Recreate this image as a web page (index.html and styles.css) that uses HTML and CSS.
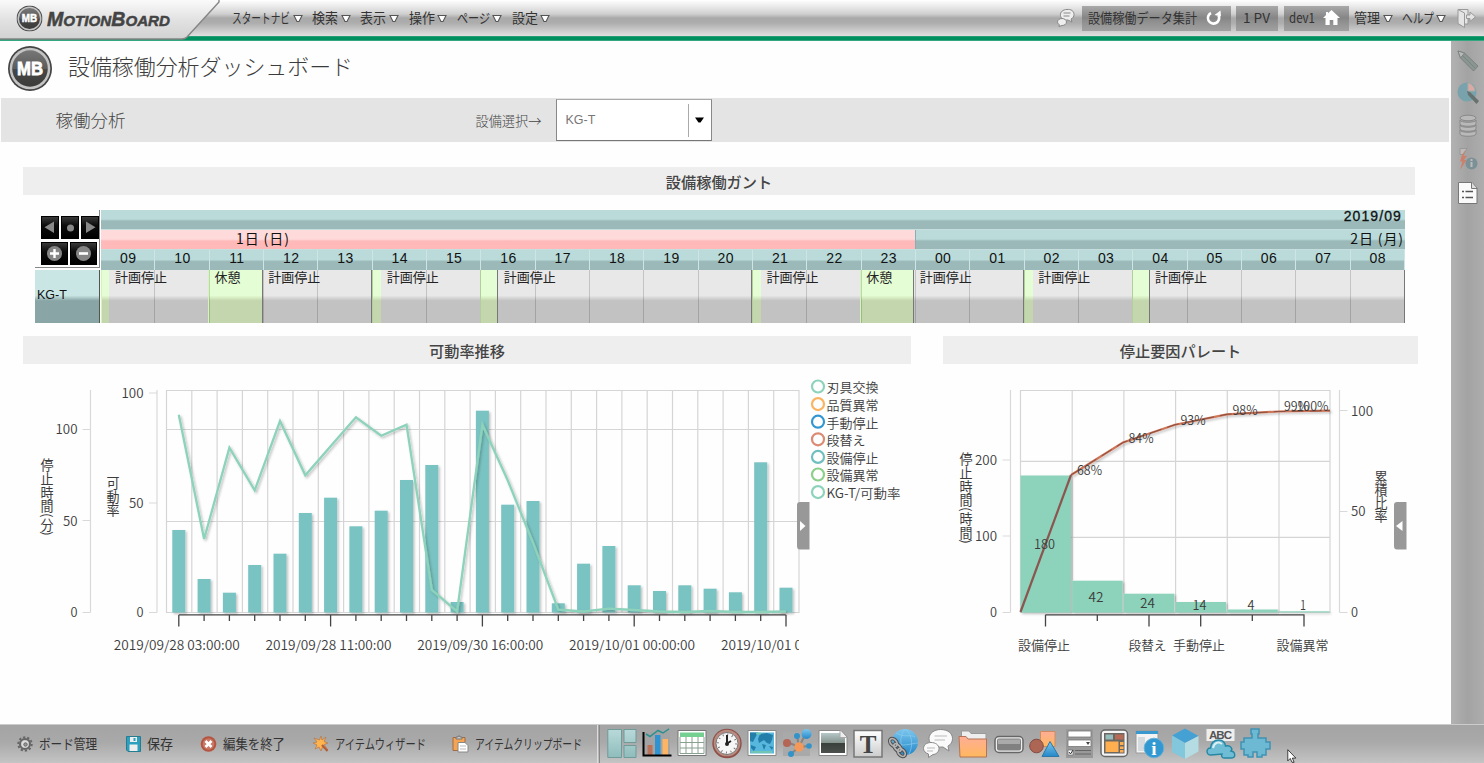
FILE: index.html
```html
<!DOCTYPE html>
<html lang="ja">
<head>
<meta charset="utf-8">
<title>MotionBoard</title>
<link rel="stylesheet" href="styles.css">
</head>
<body>
<svg class="defs" width="0" height="0">
  <defs>
    <linearGradient id="badge" x1="0" y1="0" x2="0" y2="1"><stop offset="0" stop-color="#777"/><stop offset=".5" stop-color="#5c5c5c"/><stop offset=".52" stop-color="#474747"/><stop offset="1" stop-color="#3c3c3a"/></linearGradient>
    <linearGradient id="panel" x1="0" y1="0" x2="0" y2="1"><stop offset="0" stop-color="#fff"/><stop offset="1" stop-color="#ccc"/></linearGradient>
    <linearGradient id="blue" x1="0" y1="0" x2="0" y2="1"><stop offset="0" stop-color="#7cc6ee"/><stop offset="1" stop-color="#2488c8"/></linearGradient>
    <linearGradient id="teal" x1="0" y1="0" x2="0" y2="1"><stop offset="0" stop-color="#b9d9d9"/><stop offset="1" stop-color="#8fbcbc"/></linearGradient>
    <linearGradient id="orange" x1="0" y1="0" x2="0" y2="1"><stop offset="0" stop-color="#ffae96"/><stop offset="1" stop-color="#ffb85e"/></linearGradient>
    <linearGradient id="photo" x1="0" y1="0" x2="0" y2="1"><stop offset="0" stop-color="#b5c7c7"/><stop offset=".48" stop-color="#87958f"/><stop offset=".52" stop-color="#3a403c"/><stop offset="1" stop-color="#4b504c"/></linearGradient>
    <symbol id="mb" viewBox="0 0 44 44">
      <circle cx="22" cy="22" r="22" fill="#444"/><circle cx="22" cy="22" r="20.3" fill="#c4c4c4"/><circle cx="22" cy="22" r="17.8" fill="url(#badge)"/>
      <text x="22" y="28.5" text-anchor="middle" class="mb-letters" textLength="26" lengthAdjust="spacingAndGlyphs">MB</text>
    </symbol>
  </defs>
</svg>

<header class="topbar">
  <div class="brand">
    <svg class="brand-tab" width="222" height="41" viewBox="0 0 222 41">
      <defs><linearGradient id="tab" x1="0" y1="0" x2="0" y2="1"><stop offset="0" stop-color="#fafafa"/><stop offset=".5" stop-color="#e2e2e2"/><stop offset="1" stop-color="#d2d2d2"/></linearGradient></defs>
      <path d="M0 0H219V2L187 37Q185 39 182 39H0Z" fill="url(#tab)"/>
      <path d="M0 39H182Q185 39 187 37L219 2V0" fill="none" stroke="#858585" stroke-width="1.4"/>
      <use href="#mb" x="16.5" y="5.5" width="26" height="26"/>
      <text x="47" y="26" class="wordmark" textLength="123" lengthAdjust="spacingAndGlyphs"><tspan font-size="20">M</tspan>OTION<tspan font-size="20">B</tspan>OARD</text>
    </svg>
  </div>
  <nav class="menu">
    <div class="menu-item"><svg class="label" width="58" height="20"><text y="15" textLength="58" lengthAdjust="spacingAndGlyphs">スタートナビ</text></svg><svg class="caret" width="10" height="9"><path d="M1 1.500H9L6 7.500H4Z"/></svg></div>
    <div class="menu-item"><svg class="label" width="26" height="20"><text y="15" textLength="26" lengthAdjust="spacingAndGlyphs">検索</text></svg><svg class="caret" width="10" height="9"><path d="M1 1.500H9L6 7.500H4Z"/></svg></div>
    <div class="menu-item"><svg class="label" width="26" height="20"><text y="15" textLength="26" lengthAdjust="spacingAndGlyphs">表示</text></svg><svg class="caret" width="10" height="9"><path d="M1 1.500H9L6 7.500H4Z"/></svg></div>
    <div class="menu-item"><svg class="label" width="26" height="20"><text y="15" textLength="26" lengthAdjust="spacingAndGlyphs">操作</text></svg><svg class="caret" width="10" height="9"><path d="M1 1.500H9L6 7.500H4Z"/></svg></div>
    <div class="menu-item"><svg class="label" width="33" height="20"><text y="15" textLength="33" lengthAdjust="spacingAndGlyphs">ページ</text></svg><svg class="caret" width="10" height="9"><path d="M1 1.500H9L6 7.500H4Z"/></svg></div>
    <div class="menu-item"><svg class="label" width="26" height="20"><text y="15" textLength="26" lengthAdjust="spacingAndGlyphs">設定</text></svg><svg class="caret" width="10" height="9"><path d="M1 1.500H9L6 7.500H4Z"/></svg></div>
  </nav>
  <div class="tools">
    <svg class="tool-chat" width="20" height="20" viewBox="0 0 20 20"><g fill="#eee" stroke="#888"><path d="M11 1.500C15 1 18 3 18 6.500C18 8.500 17 10 15 11L16 14L12 12C8 12.300 5 10.500 4.500 7.500C4 4 7 1.500 11 1.500Z"/><path d="M6 10.500C8.500 10.500 10.500 12 10.500 14C10.500 16 8.500 17.500 6 17.500L3 18.500L3.300 16.500C2 15.800 1.500 15 1.500 14C1.500 12 3.500 10.500 6 10.500Z"/><path d="M7.500 5h7M7.500 8h6" fill="none"/></g></svg>
    <div class="chip chip-data"><svg class="label" width="110" height="20"><text y="15" textLength="109" lengthAdjust="spacingAndGlyphs">設備稼働データ集計</text></svg>
      <svg width="16" height="16" viewBox="0 0 16 16"><path d="M5 3A5.600 5.600 0 1 0 12.500 5.500" fill="none" stroke="#fff" stroke-width="2.600"/><path d="M8.500 5L15 6.500L14.500 .5Z" fill="#fff"/></svg></div>
    <div class="chip chip-pv"><svg class="label" width="28" height="20"><text y="15" textLength="27" lengthAdjust="spacingAndGlyphs">1 PV</text></svg></div>
    <div class="chip chip-user"><svg class="label" width="27" height="20"><text y="15" textLength="26" lengthAdjust="spacingAndGlyphs">dev1</text></svg>
      <svg width="17" height="16" viewBox="0 0 17 16"><path d="M8.500 0L17 8H14.500V15H10.300V10H6.700V15H2.500V8H0L3 5V2H5V3.300Z" fill="#fff"/></svg></div>
    <div class="menu-item"><svg class="label" width="26" height="20"><text y="15" textLength="26" lengthAdjust="spacingAndGlyphs">管理</text></svg><svg class="caret" width="10" height="9"><path d="M1 1.500H9L6 7.500H4Z"/></svg></div>
    <div class="menu-item help"><svg class="label" width="32" height="20"><text y="15" textLength="32" lengthAdjust="spacingAndGlyphs">ヘルプ</text></svg><svg class="caret" width="10" height="9"><path d="M1 1.500H9L6 7.500H4Z"/></svg></div>
    <svg class="tool-exit" width="20" height="21" viewBox="0 0 20 21"><g fill="#e4e4e4" stroke="#999"><path d="M1 1.500H11V16H7.500M1 1.500L7.500 5V19.500L1 15.500Z"/><path d="M9.500 7H13V4L18.500 8.800L13 13.500V10.500H9.500Z"/></g></svg>
  </div>
</header>

<main class="workspace">
  <section class="board">
    <div class="board-title">
      <svg width="44" height="45" viewBox="0 0 44 44" preserveAspectRatio="none"><use href="#mb"/></svg>
      <svg class="title-text" width="300" height="34"><text y="25" textLength="285" lengthAdjust="spacingAndGlyphs">設備稼働分析ダッシュボード</text></svg>
    </div>
    <div class="filterbar">
      <h2 class="filter-name">稼働分析</h2>
      <span class="filter-label">設備選択→</span>
      <div class="select"><span class="select-value">KG-T</span><span class="select-arrow"><svg width="9" height="6"><path d="M0 .5H9L5.500 5.500H3.500Z" fill="#000"/></svg></span></div>
    </div>
    <h3 class="heading heading-gantt">設備稼働ガント</h3>
    <div class="gantt">
      <div class="gantt-side">
        <div class="gantt-corner">
          <div class="pad">
            <i><svg width="16" height="21"><path d="M12 4.500V16L2.500 10.300Z" fill="#888"/></svg></i>
            <i><svg width="16" height="21"><circle cx="8.500" cy="11" r="3.500" fill="#888"/></svg></i>
            <i><svg width="16" height="21"><path d="M4 4.500V16L13.500 10.300Z" fill="#888"/></svg></i>
          </div>
          <div class="pad pad-zoom">
            <i><svg width="25" height="22"><circle cx="12.500" cy="10.500" r="7.500" fill="#858585"/><path d="M8 10.500H17M12.500 6V15" stroke="#fff" stroke-width="2.400"/></svg></i>
            <i><svg width="25" height="22"><circle cx="12.500" cy="10.500" r="7.500" fill="#858585"/><path d="M8 10.500H17" stroke="#fff" stroke-width="2.600"/></svg></i>
          </div>
        </div>
        <div class="gantt-name">KG-T</div>
      </div>
      <div class="gantt-main">
        <div class="gantt-row month">2019/09</div>
        <div class="gantt-row days"><div class="day sunday">1日 (日)</div><div class="day monday">2日 (月)</div></div>
        <div class="gantt-row hours" id="hours"></div>
        <div class="gantt-body" id="segments"></div>
      </div>
    </div>
    <div class="charts">
      <div class="panel panel-trend">
        <h3 class="heading">可動率推移</h3>
        <svg id="trend" class="chart" width="888" height="296" viewBox="23 370 888 296"></svg>
      </div>
      <div class="panel panel-pareto">
        <h3 class="heading">停止要因パレート</h3>
        <svg id="pareto" class="chart" width="475" height="296" viewBox="943 370 475 296"></svg>
      </div>
    </div>
  </section>
  <aside class="sidebar">
    <svg width="22" height="22" viewBox="0 0 22 22"><g stroke="#7d8380"><path d="M1 1L7.500 3L21 16L16.500 21L3.500 8Z" fill="#899692"/><path d="M1 1L7.500 3L3.500 8Z" fill="#bbb"/><path d="M5.500 5.500L18.500 18.500" fill="none"/></g></svg>
    <svg width="22" height="22" viewBox="0 0 22 22"><circle cx="10" cy="10" r="9.500" fill="#78a2ac"/><path d="M11 9V1A9 9 0 0 1 18 9Z" fill="#d9a9a2" stroke="#aaa"/><path d="M10 9L13 10L22 19L19.500 22L11 13Z" fill="#66726f"/></svg>
    <svg width="22" height="23" viewBox="0 0 22 23"><g fill="#b9b9b9" stroke="#898989"><path d="M3 16v4c0 3 16 3 16 0v-4c0 3-16 3-16 0"/><path d="M3 11v4c0 3 16 3 16 0v-4c0 3-16 3-16 0"/><path d="M3 6v4c0 3 16 3 16 0V6c0 3-16 3-16 0"/><ellipse cx="11" cy="4" rx="8" ry="2.800"/></g></svg>
    <svg width="22" height="24" viewBox="0 0 22 24"><path d="M3 1.500H10L7 7.500H3Z" fill="#bbb" stroke="#999"/><path d="M9 2L6.500 9L10 8.500L7 13H9.500L3 23L5.500 14.500H3L5 8Z" fill="#cc7f6a"/><circle cx="14.500" cy="16.500" r="6" fill="#7c9195"/><path d="M14.500 15v5M14.500 12v2" stroke="#bbb" stroke-width="2"/></svg>
    <svg width="22" height="24" viewBox="0 0 22 24"><path d="M1.500 1.500H15L20 7V22.500H1.500Z" fill="#fafafa" stroke="#777"/><path d="M14.500 1.500V7.500H20" fill="#ddd" stroke="#777"/><path d="M8.500 10.500H16M8.500 16.500H16M5 10.500H7M5 16.500H7" stroke="#555" stroke-width="1.300"/></svg>
  </aside>
</main>

<footer class="dock">
  <div class="commands">
    <div class="command c1"><svg width="16" height="16" viewBox="0 0 16 16"><circle cx="8" cy="8" r="5" fill="#bbb" stroke="#666" stroke-width="2"/><circle cx="8" cy="8" r="6.700" fill="none" stroke="#666" stroke-width="2" stroke-dasharray="2.200 2"/><circle cx="8" cy="8" r="3.500" fill="#ddd"/><circle cx="8.500" cy="8.500" r="1.700" fill="#999" stroke="#666"/></svg><svg class="label" width="59" height="20"><text y="15" textLength="58" lengthAdjust="spacingAndGlyphs">ボード管理</text></svg></div>
    <div class="command c2"><svg width="15" height="16" viewBox="0 0 15 16"><path d="M.5.5H14.500V15.500H2L.5 14Z" fill="#2da0bd" stroke="#267c90"/><path d="M4 1H11V6H4ZM3.500 8.500H11.500V15H3.500Z" fill="#eee"/><path d="M7.500 2H9.500V5H7.500Z" fill="#2da0bd"/></svg><svg class="label" width="27" height="20"><text y="15" textLength="26" lengthAdjust="spacingAndGlyphs">保存</text></svg></div>
    <div class="command c3"><svg width="17" height="16" viewBox="0 0 17 16"><circle cx="8.500" cy="8" r="7.800" fill="#b4553f"/><circle cx="8.500" cy="8" r="5.800" fill="#c87866"/><path d="M5.500 5L11.500 11M11.500 5L5.500 11" stroke="#fff" stroke-width="2.600"/></svg><svg class="label" width="63" height="20"><text y="15" textLength="62" lengthAdjust="spacingAndGlyphs">編集を終了</text></svg></div>
    <div class="command c4"><svg width="16" height="16" viewBox="0 0 16 16"><path d="M8 0L9 4L13 1L11 5.500L15 7L11 8.500L15 14L9.500 11L8 15L6 11L2 13L4 9L0 7L4 6L1 2L6.500 4Z" fill="#ffb44e" stroke="#b77c50" stroke-width=".8"/><path d="M9 9L14.500 15" stroke="#b25c39" stroke-width="2"/></svg><svg class="label" width="92" height="20"><text y="15" textLength="91" lengthAdjust="spacingAndGlyphs">アイテムウィザード</text></svg></div>
    <div class="command c5"><svg width="17" height="18" viewBox="0 0 17 18"><path d="M1 2.500H13V15.500H1Z" fill="#f4a452" stroke="#a36b46"/><path d="M4 4V2H6L7 .5L8 2H10V4Z" fill="#ccc" stroke="#777"/><path d="M6 7.500H13L16 10.500V17H6Z" fill="#fff" stroke="#888"/><path d="M8 11H14M8 14H14" stroke="#bbb"/></svg><svg class="label" width="108" height="20"><text y="15" textLength="107" lengthAdjust="spacingAndGlyphs">アイテムクリップボード</text></svg></div>
  </div>
  <div class="divider"></div>
  <div class="palette">
    <svg viewBox="0 0 30 32"><g fill="url(#teal)" stroke="#6f9b9b"><path d="M.8 1.500H14.500V29.500H.8ZM17 1.500H29V14.500H17ZM17 17.500H29V29.500H17Z"/></g></svg>
    <svg viewBox="0 0 30 32"><path d="M2 4H28V27H2Z" fill="#a3a3a3"/><path d="M5.500 17H10.500V27H5.500Z" fill="#b97258"/><path d="M13 7H18.500V27H13Z" fill="#2f93d1"/><path d="M20.500 11H26V27H20.500Z" fill="#fbb564"/><path d="M1.500 4V27.500H29.500" fill="none" stroke="#000" stroke-width="2"/><path d="M4 6L8 8.500L16 2.500L21 5L27 .8" fill="none" stroke="#2d9090" stroke-width="1.500"/></svg>
    <svg viewBox="0 0 30 32"><path d="M1 2.500H29V27.500H1Z" fill="#fff" stroke="#777"/><path d="M3 4.500H27V9H3Z" fill="#75cf91"/><path d="M3 9V25.500H27V9M3 14.500H27M3 20H27M9 9V25.500M15 9V25.500M21 9V25.500" fill="none" stroke="#8aa091"/></svg>
    <svg viewBox="0 0 30 32"><circle cx="15" cy="15.500" r="14.700" fill="#8d5048"/><circle cx="15" cy="15" r="13.300" fill="#b98a80"/><circle cx="15" cy="15.500" r="11" fill="#f6f6f6" stroke="#777"/><circle cx="15" cy="15.500" r="9" fill="none" stroke="#777" stroke-width="2" stroke-dasharray="1 3.710"/><path d="M15 7V15.500L19 13" fill="none" stroke="#222" stroke-width="2"/><circle cx="15" cy="16" r="2" fill="#222"/></svg>
    <svg viewBox="0 0 30 32"><path d="M1 2.500H29V27.500H1Z" fill="#fff" stroke="#888"/><path d="M3 4.500H27V25.500H3Z" fill="#58b7dc"/><path d="M3 4.500H11L8 10L6 14L3 13ZM13 6L20 5L26 7L25 12L23 16L20 15L17 12L12 15L11 11ZM4 17L9 19L7 23L4 20ZM15 16L19 17L17 22ZM22 18L26 19L25 22Z" fill="#237eaa"/><path d="M4 24H25M9 5.500H14" stroke="#72c5b2" stroke-width="2"/></svg>
    <svg viewBox="0 0 30 32"><path d="M1 3.500H28V28H1Z" fill="#a9a9a9"/><path d="M5 14L17 19L24 5M17 19L15 8M17 19L27 18M17 19L9 26" fill="none" stroke="#8b837d" stroke-width="2"/><circle cx="24.500" cy="6" r="5" fill="url(#blue)"/><circle cx="5" cy="15" r="4" fill="#b46556"/><circle cx="17" cy="19" r="4.700" fill="#f49959"/><circle cx="15" cy="8" r="3" fill="#3393c8"/><circle cx="27" cy="18" r="2.800" fill="#3393c8"/><circle cx="9" cy="26" r="3" fill="#3393c8"/></svg>
    <svg viewBox="0 0 30 32"><path d="M1 2.500H23L29 9V27.500H1Z" fill="#fff" stroke="#888"/><path d="M3 5H22V10H27V25H3Z" fill="url(#photo)"/><path d="M22 2.500V9.500H29" fill="#eee" stroke="#aaa"/></svg>
    <svg viewBox="0 0 30 32"><path d="M1 2.500H29V29H1Z" fill="url(#panel)" stroke="#777" stroke-width="1.500"/><text x="15" y="24.500" text-anchor="middle" class="glyph-t">T</text></svg>
    <svg viewBox="0 0 30 32"><circle cx="17" cy="14" r="13" fill="url(#blue)"/><path d="M8 5C16 10 23 6 27 9M5 14C14 20 24 15 30 15M17 1C10 10 13 20 17 26M18 1C26 10 24 20 21 26" fill="none" stroke="#8accec" stroke-width=".7"/><g fill="none" stroke="#505050" stroke-width="3.600"><ellipse cx="5.500" cy="14.500" rx="3" ry="4.500" transform="rotate(-42 5.500 14.500)"/><ellipse cx="9.500" cy="19.500" rx="2.500" ry="4.500" transform="rotate(-42 9.500 19.500)"/><ellipse cx="13.500" cy="24.500" rx="3" ry="4.500" transform="rotate(-42 13.500 24.500)"/></g><g fill="none" stroke="#b5b5b5" stroke-width="1.700"><ellipse cx="5.500" cy="14.500" rx="3" ry="4.500" transform="rotate(-42 5.500 14.500)"/><ellipse cx="9.500" cy="19.500" rx="2.500" ry="4.500" transform="rotate(-42 9.500 19.500)"/><ellipse cx="13.500" cy="24.500" rx="3" ry="4.500" transform="rotate(-42 13.500 24.500)"/></g></svg>
    <svg viewBox="0 0 30 32"><g fill="#fafafa" stroke="#888"><path d="M17.500 1.500C25 1.500 29.500 5.500 29.500 10.500C29.500 14 28 16.500 25 18L26 23L20 19C11 20 6 15.500 6 10.500C6 5.500 11 1.500 17.500 1.500Z"/><path d="M8 14.500C12.500 14.500 16 17 16 20.500C16 24 13 26.500 10 26.500L5.500 29.500L5.500 26C2.500 25 .5 23 .5 20.500C.5 17 3.500 14.500 8 14.500Z"/></g><path d="M11.500 8H24M11.500 12H22M4 20H12M4 23H10" stroke="#bbb"/></svg>
    <svg viewBox="0 0 30 32"><path d="M3.500 16V3H11L13 5.500H28V16" fill="#eee" stroke="#999"/><path d="M1 8.500H8L10 11H28.500V29H2Z" fill="url(#orange)" stroke="#b47355"/></svg>
    <svg viewBox="0 0 30 32"><rect x="1" y="8.500" width="28" height="16" rx="4" fill="#eee" stroke="#666" stroke-width="1.500"/><rect x="3" y="10.500" width="24" height="12" rx="2" fill="#818181"/><path d="M4 11.500H26V16H4Z" fill="#aaa"/></svg>
    <svg viewBox="0 0 30 32"><path d="M11.500 3.500H26V18.500H11.500Z" fill="url(#orange)" stroke="#d28b60"/><circle cx="7.500" cy="18" r="6.800" fill="#ae6654" stroke="#824b41"/><path d="M21 13.500L30 28.500H13Z" fill="url(#blue)" stroke="#2c78a6"/></svg>
    <svg viewBox="0 0 30 32"><path d="M2 1H29V30H2Z" fill="#999"/><g fill="#fff" stroke="#777" stroke-width=".8"><path d="M4 3H27V9H4ZM4 12H27V18.500H4ZM4 22H9V27H4Z"/></g><path d="M11 22.500H27M11 26H27" stroke="#666"/><path d="M22 14H26L24 17Z" fill="#444"/><path d="M5 24L6.500 26L9 22" fill="none" stroke="#333"/></svg>
    <svg viewBox="0 0 30 32"><rect x="2" y="2" width="26.500" height="26.500" rx="4" fill="#f5f5f5" stroke="#666" stroke-width="1.500"/><path d="M5 5H25.500V25.500H5Z" fill="#6b6763"/><path d="M6.500 6.500H14V11.500H6.500Z" fill="#96bdbb"/><path d="M16 6.500H24.500V11.500H16Z" fill="#b76b56"/><path d="M6.500 13.500H19.500V24H6.500ZM21 14H24.500V17H21ZM21 18.500H24.500V21H21ZM21 22H24.500V24.500H21Z" fill="#ffaf50"/></svg>
    <svg viewBox="0 0 30 32"><path d="M2 3H24V25H2Z" fill="#f3f3f3" stroke="#999"/><path d="M2 3H24V6H2Z" fill="#3998ce"/><path d="M4 9H11V23H4Z" fill="#d4dbde"/><circle cx="20" cy="20" r="9.800" fill="#3298d2" stroke="#68afd4"/><text x="20" y="26.500" text-anchor="middle" class="glyph-i">i</text></svg>
    <svg viewBox="0 0 30 32"><path d="M15 .5L28.500 8L15 15L2 7.500Z" fill="#45a0d4"/><path d="M2 7.500L15 15V31L2 24Z" fill="#83c7dd"/><path d="M28.500 8L15 15V31L28.500 23.500Z" fill="#b5dce2"/></svg>
    <svg viewBox="0 0 30 32"><path d="M1 .5H30V13.500H1Z" fill="#eee" stroke="#aaa"/><text x="15.500" y="11" text-anchor="middle" class="glyph-abc" textLength="23">ABC</text><path d="M6 27C1 27 .5 20 5.500 20C6 15 9 12 14 12C18 12 20 15 20.500 18C26 17 28 21 26 23C31 24 31 30 26 30H19C17 30 16 28 17 26Z" fill="#6fbcd5" stroke="#2487a4" stroke-width="1.400"/><path d="M8 20C9 15 13 13 17 16" fill="none" stroke="#dbeff5" stroke-width="2"/></svg>
    <svg viewBox="0 0 30 32"><path d="M1 14H4V10H12V6H11V1H19V6H18V10H26V14H30V21H26V27H22V29H17V24H13V29H8V27H4V21H1Z" fill="#6db9d3" stroke="#3f93b2" stroke-width="1.500"/></svg>
  </div>
</footer>
<svg class="cursor" width="14" height="20" viewBox="0 0 14 20"><path d="M1 1V17L4.500 13.500L7 19H10L7.500 13H12.500Z" fill="#fff" stroke="#000"/></svg>
<script src="app.js"></script>
</body>
</html>
```

FILE: styles.css
```css
* { box-sizing: border-box; }
body {
  margin: 0; width: 1484px; height: 763px; overflow: hidden;
  display: flex; flex-direction: column; background: #fefefe;
  font-family: "Noto Sans CJK JP", "Liberation Sans", sans-serif;
  font-size: 13px; color: #333;
}
svg { display: block; flex: none; overflow: visible; }
.defs { position: absolute; }
h2, h3 { margin: 0; font-weight: 400; }

/* header */
.topbar {
  height: 41px; flex: none; display: flex; align-items: flex-start;
  background: linear-gradient(#fff 0, #ebebeb 6px, #cfcfcf 14px, #a9a9a9 18px, #adadad 23px, #c9c9c9 30px, #e0e0e0 36px, #3aa57f 36px, #00905f 37.500px, #00905f 39.500px, #4fb393 41px);
}
.brand { width: 232px; flex: none; }
.mb-letters { font: 700 18px "Liberation Sans", sans-serif; fill: #fff; stroke: #fff; stroke-width: .8; }
.wordmark { font: italic 700 15.500px "Liberation Sans", sans-serif; fill: #444; stroke: #444; stroke-width: .5; }
.menu { display: flex; gap: 9.700px; padding-top: 8px; }
.menu-item { display: flex; align-items: center; gap: 2.500px; height: 20px; }
.label text { font-size: 13.500px; fill: #333; }
.caret path { fill: #fff; stroke: #555; stroke-width: 1.100; }
.tools { margin-left: auto; display: flex; align-items: center; height: 36px; padding-right: 7px; }
.tool-chat { margin-right: 6px; }
.chip {
  height: 25px; display: flex; align-items: center; justify-content: space-between;
  background: linear-gradient(#a9a9a9, #858585 48%, #8e8e8e 60%, #a1a1a1);
}
.chip-data { width: 149px; padding: 0 9px 0 6px; margin-right: 5px; }
.chip-pv { width: 42px; padding-left: 7px; margin-right: 6px; }
.chip-user { width: 65px; padding: 0 9px 0 5px; margin-right: 5px; }
.help { margin-left: 9px; }
.tool-exit { margin-left: 11px; }

/* layout */
.workspace { height: 683px; flex: none; display: flex; }
.board { width: 1451px; flex: none; }
.sidebar {
  width: 33px; padding: 9px 0 0 6px; display: flex; flex-direction: column; gap: 10px;
  background: linear-gradient(90deg, #b2b2b2, #a3a3a3 50%, #adadad);
}
.board-title { height: 57px; display: flex; align-items: flex-start; padding: 5px 0 0 8px; gap: 16px; }
.title-text { margin-top: 4px; }
.title-text text { font-size: 22px; font-weight: 300; fill: #3c3c3c; }
.filterbar { margin-left: 1px; width: 1448px; height: 44px; background: #e4e4e4; display: flex; align-items: center; padding-left: 54.500px; }
.filter-name { width: 420px; font-size: 17.500px; font-weight: 300; color: #444; line-height: 44px; }
.filter-label { width: 80px; font-size: 13.200px; color: #444; font-weight: 300; }
.select { width: 156px; height: 42px; border: 1.500px solid #999; border-color: #aaa #888 #777 #888; background: #fff; display: flex; align-items: center; justify-content: space-between; padding: 4px 0; }
.select-value { padding-left: 9px; color: #777; font: 12.500px "Liberation Sans", sans-serif; }
.select-arrow { width: 23px; height: 33px; border-left: 1px solid #aaa; display: flex; align-items: center; justify-content: center; }
.heading { height: 28px; background: #eee; text-align: center; font-size: 15.200px; line-height: 28px; font-weight: 500; color: #444; }
.heading-gantt { margin: 25px 0 0 23px; width: 1392px; padding-right: 0; }

/* gantt */
.gantt { margin: 15px 0 0 35px; width: 1370px; height: 113px; display: flex; }
.gantt-side { width: 66px; flex: none; }
.gantt-corner { width: 65px; height: 58px; border-right: 1.500px solid #888; border-bottom: 1.500px solid #888; padding: 6px 4px 0 6px; display: flex; flex-direction: column; gap: 3px; }
.pad { display: flex; gap: 2px; }
.pad i { flex: 1; height: 23px; background: linear-gradient(#3a3a3a, #0c0c0c 40%, #000); border: 1px solid #000; display: flex; justify-content: center; }
.gantt-name { margin-top: 2px; width: 65px; height: 53px; border-right: 1px solid #555; padding: 14px 0 0 2px; font: 12.500px/22px "Liberation Sans", sans-serif; color: #111; background: linear-gradient(#c9e6e5 48%, #8aa5a5 58%); }
.gantt-main { width: 1304px; }
.gantt-row { height: 20px; background: linear-gradient(#badbda 48%, #9ab9b8 58%); color: #111; }
.month { height: 19px; text-align: right; padding-right: 3px; font: 14px/12px "Liberation Sans", sans-serif; letter-spacing: 1.100px; -webkit-text-stroke: .3px #111; }
.days { display: flex; border-top: 1px solid #c7dede; }
.day { font-size: 14px; line-height: 16px; letter-spacing: .9px; white-space: nowrap; }
.sunday { width: 814px; padding-left: 135px; background: linear-gradient(#ffdada 48%, #ffb9b9 58%); }
.monday { flex: 1; text-align: right; padding-right: 1px; border-left: 1px solid #87afb5; }
.hours { display: flex; border-top: 1px solid #c7dede; height: 21px; }
.hour { flex: 1; text-align: center; font: 14px/17px "Liberation Sans", sans-serif; letter-spacing: .4px; border-right: 1px solid #cfe5e5; padding-left: 1px; }
.gantt-body { height: 53px; display: flex; position: relative; border-right: 1px solid #777; }
.gantt-body::after {
  content: ""; position: absolute; inset: 0;
  background: repeating-linear-gradient(90deg, transparent 0 53.300px, rgba(0, 0, 0, .16) 53.300px 54.333px);
}
.segment { flex: none; min-width: 0; white-space: nowrap; font-size: 13px; line-height: 13px; color: #222; }
.stop { background: linear-gradient(#e8e8e8 48%, #c2c2c2 58%); padding-left: 5.500px; }
.rest { background: linear-gradient(#e5fdd4 48%, #c3d6ad 58%); padding-left: 5px; border-left: 1px solid #d4f5b8; }
.edge { border-right: 1.500px solid #777; }

/* charts */
.charts { display: flex; gap: 32px; padding: 13px 0 0 23px; }
.panel-trend { width: 888px; }
.panel-pareto { width: 475px; }
.chart { margin-top: 6px; }
.chart text { font-size: 13px; font-weight: 350; fill: #3c3c3c; }
.chart .vertical { writing-mode: vertical-rl; font-weight: 400; }
.grid { stroke: #d5d5d5; stroke-width: 1.200; fill: none; }
.axis { stroke: #d9d9d9; stroke-width: 1.200; fill: none; }
.base { stroke: #444; stroke-width: 1.300; fill: none; }

/* footer */
.dock { height: 39px; flex: none; display: flex; align-items: center; border-top: 1px solid #ccc; background: linear-gradient(#a4a4a4, #a9a9a9 45%, #c4c4c4); padding-bottom: 1px; }
.commands { width: 597px; display: flex; }
.command { display: flex; align-items: center; gap: 6px; }
.c1 { margin-left: 17px; }
.c2 { margin-left: 28px; }
.c3 { margin-left: 26px; }
.c4 { margin-left: 27px; }
.c5 { margin-left: 25px; }
.divider { width: 3px; height: 38px; border-left: 1px solid #ddd; border-right: 1px solid #888; }
.palette { display: flex; gap: 5.200px; margin-left: 6.500px; }
.palette svg { width: 30px; height: 32px; }
.glyph-t { font: 700 25px "Liberation Serif", serif; fill: #444; }
.glyph-i { font: 700 19px "Liberation Serif", serif; fill: #fff; }
.glyph-abc { font: 700 11.500px "Liberation Sans", sans-serif; fill: #555; }
.cursor { position: absolute; left: 1285px; top: 749px; height: 14px; overflow: hidden; }
```

FILE: app.js
```js
const NS = "http://www.w3.org/2000/svg";

function add(parent, tag, attrs, text) {
  const el = document.createElementNS(NS, tag);
  for (const key in attrs) el.setAttribute(key, attrs[key]);
  if (text !== undefined) el.textContent = text;
  parent.appendChild(el);
  return el;
}
const path = (svg, d, cls) => add(svg, "path", { d, class: cls });
const label = (svg, x, y, text, width, anchor = "middle") =>
  add(svg, "text", { x, y, "text-anchor": anchor, textLength: width, lengthAdjust: "spacingAndGlyphs" }, text);
const vertical = (svg, x, y, text, length) =>
  add(svg, "text", { x, y, class: "vertical", textLength: length, lengthAdjust: "spacingAndGlyphs" }, text);

/* gantt */
const hours = document.getElementById("hours");
for (let i = 0; i < 24; i++) {
  const cell = document.createElement("div");
  cell.className = "hour";
  cell.textContent = String((i + 9) % 24).padStart(2, "0");
  hours.appendChild(cell);
}
const segments = [
  [8.5, "rest"], [99, "stop", "計画停止"], [54.500, "rest edge", "休憩"],
  [109.500, "stop edge", "計画停止"], [9, "rest"], [98.500, "stop", "計画停止"], [18.500, "rest edge"],
  [254, "stop edge", "計画停止"], [9, "rest"], [99.500, "stop", "計画停止"], [54, "rest edge", "休憩"],
  [109.500, "stop edge", "計画停止"], [9, "rest"], [99, "stop", "計画停止"], [18, "rest edge"], [254.500, "stop", "計画停止"]
];
const total = segments.reduce((sum, [size]) => sum + size, 0);
const body = document.getElementById("segments");
for (const [size, kind, text = ""] of segments) {
  const el = document.createElement("div");
  el.className = "segment " + kind;
  if (!text) el.style.padding = "0";
  el.style.width = size / total * 100 + "%";
  el.textContent = text;
  body.appendChild(el);
}

/* operating rate trend */
const trend = document.getElementById("trend");
const defs = add(trend, "defs", {});
const shadow = add(defs, "filter", { id: "soft", x: "-10%", y: "-10%", width: "125%", height: "125%" });
add(shadow, "feDropShadow", { dx: 1.5, dy: 1.5, stdDeviation: 1, "flood-color": "#000", "flood-opacity": 0.25 });
const clip = add(defs, "clipPath", { id: "plot" });
add(clip, "rect", { x: 23, y: 370, width: 776, height: 296 });

const STEP = 25.3;
let grid = "M166.500 390.500H799V612.500H166.500ZM166.500 429.500H799M166.500 521.500H799";
for (let i = 1; i < 25; i++) grid += `M${166.5 + STEP * i} 390.500V612.500`;
path(trend, grid, "grid");
path(trend, "M90.500 390V612.500M82.500 612.500H90.500M82.500 520.500H90.500M82.500 429.500H90.500", "axis");
path(trend, "M157 390V612.500M149 612.500H157M149 503H157M149 393H157", "axis");

const barTops = [530, 579, 592.7, 565, 553.7, 513, 497.7, 526.3, 510.7, 480, 465, 602, 410.7, 504.7, 501, 603.3, 563.7, 546, 585.3, 591, 585.3, 588.7, 592.3, 462.3, 587.7];
const rates = [414.7, 539, 447.7, 490.3, 421, 475.3, 446.3, 417.3, 435.7, 424.7, 590, 611.5, 424.7, 480.3, 542.7, 609.7, 611.5, 608.7, 610, 611.5, 612, 611, 612, 612, 611.5];
const bars = add(trend, "g", { filter: "url(#soft)", fill: "#79c3c2" });
barTops.forEach((y, i) => add(bars, "rect", { x: 172.3 + STEP * i, y, width: 13, height: 612.5 - y }));
add(trend, "polyline", {
  points: rates.map((y, i) => `${178.8 + STEP * i},${y}`).join(" "),
  fill: "none", stroke: "#8dd3bb", "stroke-width": 2.3, filter: "url(#soft)"
});
let ticks = "M179 614.800H785.700";
for (let i = 0; i < 25; i++) ticks += `M${178.8 + STEP * i} 614.800V${i % 6 ? 621 : 626.5}`;
path(trend, ticks, "base");

const dates = add(trend, "g", { "clip-path": "url(#plot)" });
["2019/09/28 03:00:00", "2019/09/28 11:00:00", "2019/09/30 16:00:00", "2019/10/01 00:00:00", "2019/10/01 08:00:00"]
  .forEach((text, i) => label(dates, 113.7 + STEP * 6 * i, 650, text, 126, "start"));
[[77.5, 617, "0", 7], [77.5, 525.500, "50", 14.500], [77.5, 434, "100", 22], [143.5, 617, "0", 7], [143.5, 507.500, "50", 14.500], [143.5, 398, "100", 22]]
  .forEach(([x, y, text, width]) => label(trend, x, y, text, width, "end"));
vertical(trend, 47, 458, "停止時間(分)", 78);
vertical(trend, 113, 476, "可動率", 41);

[["#8dd3bb", "刃具交換", 52], ["#fbb461", "品質異常", 52], ["#3296d2", "手動停止", 52], ["#dc8a72", "段替え", 39], ["#6fbfc0", "設備停止", 52], ["#8ccf8b", "設備異常", 52], ["#8dd3bb", "KG-T/可動率", 74]]
  .forEach(([color, text, width], i) => {
    add(trend, "circle", { cx: 818, cy: 386.5 + 17.6 * i, r: 6, fill: "none", stroke: color, "stroke-width": 2.2 });
    label(trend, 826.500, 392.3 + 17.6 * i, text, width, "start");
  });

function handle(svg, x, arrow) {
  path(svg, `M${x} 505Q${x} 502 ${x + 3} 502H${x + 12.500}V549.500H${x + 3}Q${x} 549.500 ${x} 546Z`, "").setAttribute("fill", "#989898");
  path(svg, arrow, "").setAttribute("fill", "#fff");
}
handle(trend, 797, "M800 521V531L805.500 526Z");

/* stop cause pareto */
const pareto = document.getElementById("pareto");
const CELL = 51.7;
grid = "M1020.500 390.500H1330V612.500H1020.500ZM1020.500 461.300H1330M1020.500 537.300H1330";
for (let i = 1; i < 6; i++) grid += `M${1020.5 + CELL * i} 390.500V612.500`;
path(pareto, grid, "grid");
path(pareto, "M1010.500 390V612.500M1002.500 612.500H1010.500M1002.500 536H1010.500M1002.500 460H1010.500", "axis");
path(pareto, "M1339.500 390V612.500M1339.500 612.500H1347.500M1339.500 511.500H1347.500M1339.500 410.500H1347.500", "axis");
const columns = add(pareto, "g", { filter: "url(#soft)", fill: "#8dd3bb" });
[475.5, 580.7, 593.7, 602, 609.5, 611.3].forEach((y, i) =>
  add(columns, "rect", { x: 1020.5 + CELL * i, y, width: 50.5, height: 612.5 - y }));
add(pareto, "polyline", {
  points: "1071,475 1123,442.500 1175,424.700 1227,414.300 1278.500,411.500 1330,410.700",
  fill: "none", stroke: "#cf7558", "stroke-width": 2.2, filter: "url(#soft)"
});
path(pareto, "M1020.500 612L1071 475", "").setAttribute("style", "stroke:#8b5550;stroke-width:2.2");
path(pareto, "M1071 475L1123 442.500L1175 424.700L1227 414.300L1278.500 411.500L1330 410.700", "").setAttribute("style", "stroke:#774238;stroke-width:.8;fill:none;stroke-dasharray:12 6");
path(pareto, "M1045.500 614.800H1304.500M1045.500 614.800V626.500M1097.300 614.800V621M1149 614.800V626.500M1200.700 614.800V626.500M1252.300 614.800V621M1304 614.800V626.500", "base");
[["180", 1044.5, 549, 21], ["42", 1096, 601.5, 15], ["24", 1147.5, 608, 15], ["14", 1199.5, 610, 14], ["4", 1251, 610, 7], ["1", 1303, 610, 6],
 ["68%", 1089.5, 475, 25], ["84%", 1141, 443, 25], ["93%", 1193, 424.5, 25], ["98%", 1245, 414.5, 25], ["99%", 1296.500, 411, 25], ["100%", 1312.500, 410.5, 32],
 ["設備停止", 1044, 650, 52], ["段替え", 1147.5, 650, 38], ["手動停止", 1199, 650, 52], ["設備異常", 1302.5, 650, 52]]
  .forEach(([text, x, y, width]) => label(pareto, x, y, text, width));
[[997, 617, "0", 7], [997, 541, "100", 22], [997, 465, "200", 22]].forEach(([x, y, text, width]) => label(pareto, x, y, text, width, "end"));
[[1351, 617, "0", 7], [1351, 516, "50", 14.500], [1351, 415.500, "100", 22]].forEach(([x, y, text, width]) => label(pareto, x, y, text, width, "start"));
vertical(pareto, 966, 452, "停止時間(時間)", 92);
vertical(pareto, 1381, 470, "累積比率", 53);
handle(pareto, 1394, "M1402.500 521V531L1396 526Z");
```
